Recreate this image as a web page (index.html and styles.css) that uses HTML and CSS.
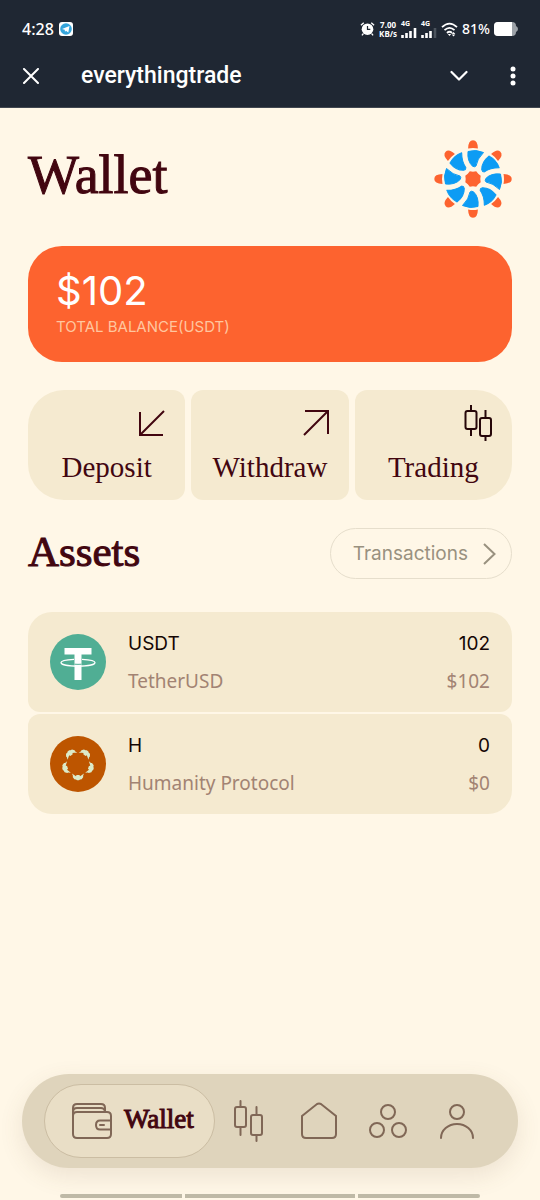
FILE: index.html
```html
<!DOCTYPE html>
<html lang="en">
<head>
<meta charset="utf-8">
<meta name="viewport" content="width=device-width, initial-scale=1">
<title>Wallet</title>
<link rel="stylesheet" href="styles.css">
</head>
<body>
<header class="top">
  <div class="status">
    <span class="clock">4:28</span>
    <svg width="14" height="14" viewBox="0 0 14 14" aria-hidden="true"><rect width="14" height="14" rx="3" fill="#fff"/><circle cx="7" cy="7" r="5.8" fill="#34a5dc"/><path d="M3 7l7.5-3-1.2 6.5-2.3-1.8-1 1-.3-2z" fill="#fff"/></svg>
    <div class="status-right">
      <svg width="15" height="16" viewBox="0 0 16 16" aria-hidden="true"><circle cx="8" cy="8.2" r="6.2" fill="#fff"/><path d="M1 4l3-2.6M15 4l-3-2.6M3.5 13l-1.4 1.8M12.5 13l1.4 1.8" stroke="#fff" stroke-width="1.5" fill="none"/><path d="M8 4.7v3.8h3" stroke="#1f2733" stroke-width="1.3" fill="none"/></svg>
      <span class="speed"><span>7.00</span><span>KB/s</span></span>
      <span class="signal"><span>4G</span><svg width="16" height="10" viewBox="0 0 16 10" aria-hidden="true"><path d="M1.5 7v3M5.5 5v5M9.5 3v7M14 0v10" stroke="#fff" stroke-width="2.6"/></svg></span>
      <span class="signal"><span>4G</span><svg width="16" height="10" viewBox="0 0 16 10" aria-hidden="true"><path d="M1.5 7v3M5.5 5v5M9.5 3v7" stroke="#fff" stroke-width="2.6"/><path d="M14 0v10" stroke="#4b535d" stroke-width="2.6"/></svg></span>
      <svg width="17" height="15" viewBox="0 0 17 15" fill="none" aria-hidden="true"><path d="M1 5.2Q8.5-2 16 5.2M3.5 8.2Q8.5 3.5 13.5 8.2M6 11Q8.5 8.6 11 11" stroke="#fff" stroke-width="1.8"/><path d="M6.800 12h3.400L8.500 14zM12.500 10l1.800 2h-3.600zM14.300 12.500l-1.800 2-1.800-2z" fill="#fff"/></svg>
      <span class="percent">81%</span>
      <svg width="24" height="14" viewBox="0 0 24 14" aria-hidden="true"><rect width="22" height="14" rx="4" fill="#9ba1a7"/><path d="M22 4q2 1 2 3t-2 3z" fill="#9ba1a7"/><path d="M4 0h14v14H4q-4 0-4-4V4q0-4 4-4z" fill="#fff"/></svg>
    </div>
  </div>
  <div class="appbar">
    <button class="icon-btn" aria-label="Close"><svg width="18" height="16" viewBox="0 0 18 16"><path d="M2 1l14 14M16 1L2 15" stroke="#fff" stroke-width="2" stroke-linecap="round"/></svg></button>
    <span class="app-name">everythingtrade</span>
    <button class="icon-btn" aria-label="Minimize"><svg width="18" height="12" viewBox="0 0 18 12" fill="none"><path d="M1.500 2L9 9.500 16.500 2" stroke="#fff" stroke-width="2.200" stroke-linecap="round" stroke-linejoin="round"/></svg></button>
    <button class="icon-btn menu" aria-label="Menu"><svg width="6" height="20" viewBox="0 0 6 20" fill="#fff"><circle cx="3" cy="3" r="2.500"/><circle cx="3" cy="10" r="2.500"/><circle cx="3" cy="17" r="2.500"/></svg></button>
  </div>
</header>

<main class="content">
  <div class="heading">
    <h1>Wallet</h1>
    <svg width="78" height="78" viewBox="-39 -39 78 78" aria-hidden="true">
      <defs><g id="spoke"><path d="M-5-27.500Q3-30 10.500-26.500Q4-20 3-13Q1.500-11.500-.500-12.800Q-6-18-5-27.500Z" fill="#0d9cf4" stroke="#0d9cf4" stroke-width="1" stroke-linejoin="round"/><path d="M-4.900-30.500Q-4.700-38.700 0-38.700T4.900-30.500Q0-31.500-4.900-30.500Z" fill="#fd632f"/></g></defs>
      <use href="#spoke"/><use href="#spoke" transform="rotate(45)"/><use href="#spoke" transform="rotate(90)"/><use href="#spoke" transform="rotate(135)"/><use href="#spoke" transform="rotate(180)"/><use href="#spoke" transform="rotate(225)"/><use href="#spoke" transform="rotate(270)"/><use href="#spoke" transform="rotate(315)"/>
      <path d="M-3.200-7.700L0-7.300 3.200-7.700 5.200-5.200 7.700-3.200 7.300 0 7.700 3.200 5.200 5.200 3.200 7.700 0 7.300-3.200 7.700-5.200 5.200-7.700 3.200-7.300 0-7.700-3.200-5.200-5.200Z" fill="#fd632f"/>
    </svg>
  </div>

  <section class="balance">
    <strong>$102</strong>
    <span>TOTAL BALANCE(USDT)</span>
  </section>

  <div class="actions">
    <button class="action"><svg width="26" height="26" viewBox="0 0 26 26" fill="none"><path d="M25 1L1 25M1 2v23h23" stroke="#420610" stroke-width="2"/></svg><span>Deposit</span></button>
    <button class="action"><svg width="26" height="26" viewBox="0 0 26 26" fill="none"><path d="M1 25L25 1M2 1h23v23" stroke="#420610" stroke-width="2"/></svg><span>Withdraw</span></button>
    <button class="action trading"><svg width="28" height="38" viewBox="0 0 28 38" fill="none" stroke="#260709" stroke-width="2"><rect x="1.500" y="7" width="11" height="18" rx="2"/><rect x="16" y="14" width="11" height="18" rx="2"/><path d="M7 1v6M7 25v7M21.500 6v8M21.500 32v5"/></svg><span>Trading</span></button>
  </div>

  <section>
    <div class="assets-head">
      <h2>Assets</h2>
      <a class="transactions" href="#transactions">Transactions<svg width="13" height="22" viewBox="0 0 13 22" fill="none"><path d="M1 1l10.500 10L1 21" stroke="#99917f" stroke-width="2"/></svg></a>
    </div>
    <ul class="assets">
      <li class="asset">
        <svg width="56" height="56" viewBox="0 0 56 56" aria-hidden="true"><circle cx="28" cy="28" r="28" fill="#50ae94"/><path d="M14.500 14h27v6.500h-10V46h-7V20.500h-10z" fill="#fff"/><path d="M24 25.300C15 25.800 11 27 11 28.500c0 2.300 8 3.700 17 3.700s17-1.400 17-3.700c0-1.500-4-2.700-13-3.200" fill="none" stroke="#fff" stroke-width="1.300"/><path d="M24.500 30.200q3.500.3 7 0" stroke="#50ae94" fill="none"/></svg>
        <div class="asset-name"><b>USDT</b><span>TetherUSD</span></div>
        <div class="asset-value"><b>102</b><span>$102</span></div>
      </li>
      <li class="asset">
        <svg width="56" height="56" viewBox="-28 -28 56 56" aria-hidden="true"><defs><path id="person" d="M-6 9.500L-3.500 11.300-2 12.200-1.500 11H1.500L2 12.200 3.500 11.300 6 9.500 5 12 5.300 13 3.700 15.300 2 15.500 1 16.300H-1L-2 15.500-3.700 15.300-5.300 13-5 12Z" fill="#dcebc9"/></defs><circle r="28" fill="#bd5500"/><use href="#person"/><use href="#person" transform="rotate(72)"/><use href="#person" transform="rotate(144)"/><use href="#person" transform="rotate(216)"/><use href="#person" transform="rotate(288)"/></svg>
        <div class="asset-name"><b>H</b><span>Humanity Protocol</span></div>
        <div class="asset-value"><b>0</b><span>$0</span></div>
      </li>
    </ul>
  </section>
</main>

<nav class="tabs" aria-label="Main">
  <a class="tab current" href="#wallet" aria-current="page"><svg width="40" height="36" viewBox="0 0 40 36"><path d="M1 9V5q0-4 4-4h24q4 0 4 4v4M1 9q0-4 4-4h24q3 0 4 3M1 13q0-4 4-4h30q4 0 4 4v18q0 4-4 4H5q-4 0-4-4V9M39 17.500H28q-4 0-4 4.500t4 4.500h11M28 22h4"/></svg><span>Wallet</span></a>
  <a class="tab" href="#trading" aria-label="Trading"><svg width="32" height="42" viewBox="0 0 32 42"><rect x="2" y="7" width="11" height="20" rx="2"/><rect x="18" y="15" width="11" height="20" rx="2"/><path d="M7.500 1v6M7.500 27v8M23.500 7v8M23.500 35v6"/></svg></a>
  <a class="tab" href="#home" aria-label="Home"><svg width="36" height="38" viewBox="0 0 36 38"><path d="M1 14L16 2q2-1 4 0l15 12v18q0 4-4 4H5q-4 0-4-4Z"/></svg></a>
  <a class="tab" href="#community" aria-label="Community"><svg width="38" height="36" viewBox="0 0 38 36"><circle cx="19" cy="9" r="7"/><circle cx="8" cy="27" r="7"/><circle cx="30" cy="27" r="7"/></svg></a>
  <a class="tab" href="#profile" aria-label="Profile"><svg width="34" height="36" viewBox="0 0 34 36"><circle cx="17" cy="9" r="7"/><path d="M1 35a16 14 0 0 1 32 0"/></svg></a>
</nav>
<div class="gesture" aria-hidden="true"><i></i><i></i><i></i></div>
</body>
</html>
```

FILE: styles.css
```css
* { box-sizing: border-box; }

body {
  margin: 0;
  min-height: 100vh;
  display: flex;
  flex-direction: column;
  background: #fff7e7;
  color: #420610;
  font-family: Inter, "Liberation Sans", sans-serif;
}

button { border: 0; background: none; color: inherit; cursor: pointer; }
a { color: inherit; text-decoration: none; }
svg { display: block; flex: none; }

.top {
  padding: 15px 20px 0 22px;
  background: #1f2733;
  border-bottom: 1px solid #414750;
  color: #fff;
}

.status,
.status-right,
.appbar { display: flex; align-items: center; }

.status { gap: 5px; height: 28px; padding-right: 2px; }
.status-right { margin-left: auto; gap: 4px; }
.clock { font: 500 16px/20px "Noto Sans", sans-serif; }
.percent { font: 500 14px/20px "Noto Sans", sans-serif; }
.speed { display: grid; font: 700 8px/9px "Noto Sans", sans-serif; text-align: center; }
.signal { display: grid; gap: 1px; font: 700 7px/7px "Noto Sans", sans-serif; }

.appbar { height: 64px; padding-top: 2px; }
.icon-btn { display: grid; place-items: center; padding: 8px; margin: 0 -8px; }
.app-name {
  flex: 1;
  padding-left: 41px;
  font: 500 23px/28px Roboto, sans-serif;
}
.menu { margin-left: 34px; margin-right: -4px; }

.content { padding: 32px 28px; }

h1, h2, .action, .current { font-family: "Liberation Serif", serif; }
h1, h2 { margin: 0; font-weight: 400; }

.heading { display: flex; justify-content: space-between; align-items: center; }
h1 { font-size: 54px; line-height: 60px; -webkit-text-stroke: 1px; padding-bottom: 8px; }

.balance {
  display: flex;
  flex-direction: column;
  margin: 28px 0;
  padding: 20px 28px 24px;
  border-radius: 34px;
  background: #fd632f;
  color: #fff;
}
.balance strong { font-size: 40px; line-height: 50px; font-weight: 400; }
.balance span { font-size: 15px; line-height: 22px; color: #ffc69f; }

.actions { display: grid; grid-template-columns: repeat(3, 1fr); gap: 6px; }
.action {
  display: flex;
  flex-direction: column;
  align-items: center;
  justify-content: space-between;
  height: 110px;
  padding: 20px 20px 16px;
  border-radius: 12px;
  background: #f5ead0;
  font-size: 29px;
  line-height: 34px;
}
.action svg { align-self: flex-end; }
.action:first-child { border-radius: 36px 12px 12px 36px; }
.action:last-child { border-radius: 12px 36px 36px 12px; }
.trading { padding-top: 14px; }

.assets-head { display: flex; justify-content: space-between; align-items: center; margin: 28px 0 33px; }
h2 { font-size: 43px; line-height: 46px; padding-bottom: 4px; -webkit-text-stroke: 1px; }
.transactions {
  display: flex;
  align-items: center;
  gap: 15px;
  padding: 11px 15px 11px 22px;
  border: 1px solid #e6decc;
  border-radius: 26px;
  color: #99917f;
  font-size: 19px;
  line-height: 27px;
}

.assets { display: grid; gap: 2px; margin: 0; padding: 0; list-style: none; }
.asset {
  display: flex;
  align-items: center;
  gap: 22px;
  height: 100px;
  padding: 0 22px;
  border-radius: 24px 24px 12px 12px;
  background: #f5ead0;
}
.asset:last-child { border-radius: 12px 12px 24px 24px; }
.asset-name, .asset-value { display: grid; gap: 9px; }
.asset-value { margin-left: auto; text-align: right; }
.asset b { font-size: 19px; line-height: 28px; font-weight: 400; color: #140604; }
.asset span { font: 400 19px/28px "Noto Sans", sans-serif; color: #a28373; }

.tabs {
  display: flex;
  align-items: center;
  margin: auto 22px 26px;
  padding: 10px 26px 10px 22px;
  border-radius: 47px;
  background: #dfd4bc;
  box-shadow: 0 8px 24px #6b53361f;
}
.tab { flex: 1; display: flex; justify-content: center; }
.tab svg { fill: none; stroke: #806756; stroke-width: 2; stroke-linecap: round; }
.current {
  flex: none;
  align-items: center;
  gap: 12px;
  height: 74px;
  padding: 0 20px 0 27px;
  border: 1px solid #cbbda3;
  border-radius: 37px;
  background: #e9dec6;
  font-size: 27px;
  line-height: 34px;
  -webkit-text-stroke: 1px;
}
.current span { padding-bottom: 4px; }

.gesture { display: flex; gap: 3px; margin: 0 60px; padding-bottom: 2px; }
.gesture i { flex: 170; height: 4px; background: #bfb9a6; }
.gesture i:first-child { flex: 122; border-radius: 2px 0 0 2px; }
.gesture i:last-child { flex: 122; border-radius: 0 2px 2px 0; }
```
